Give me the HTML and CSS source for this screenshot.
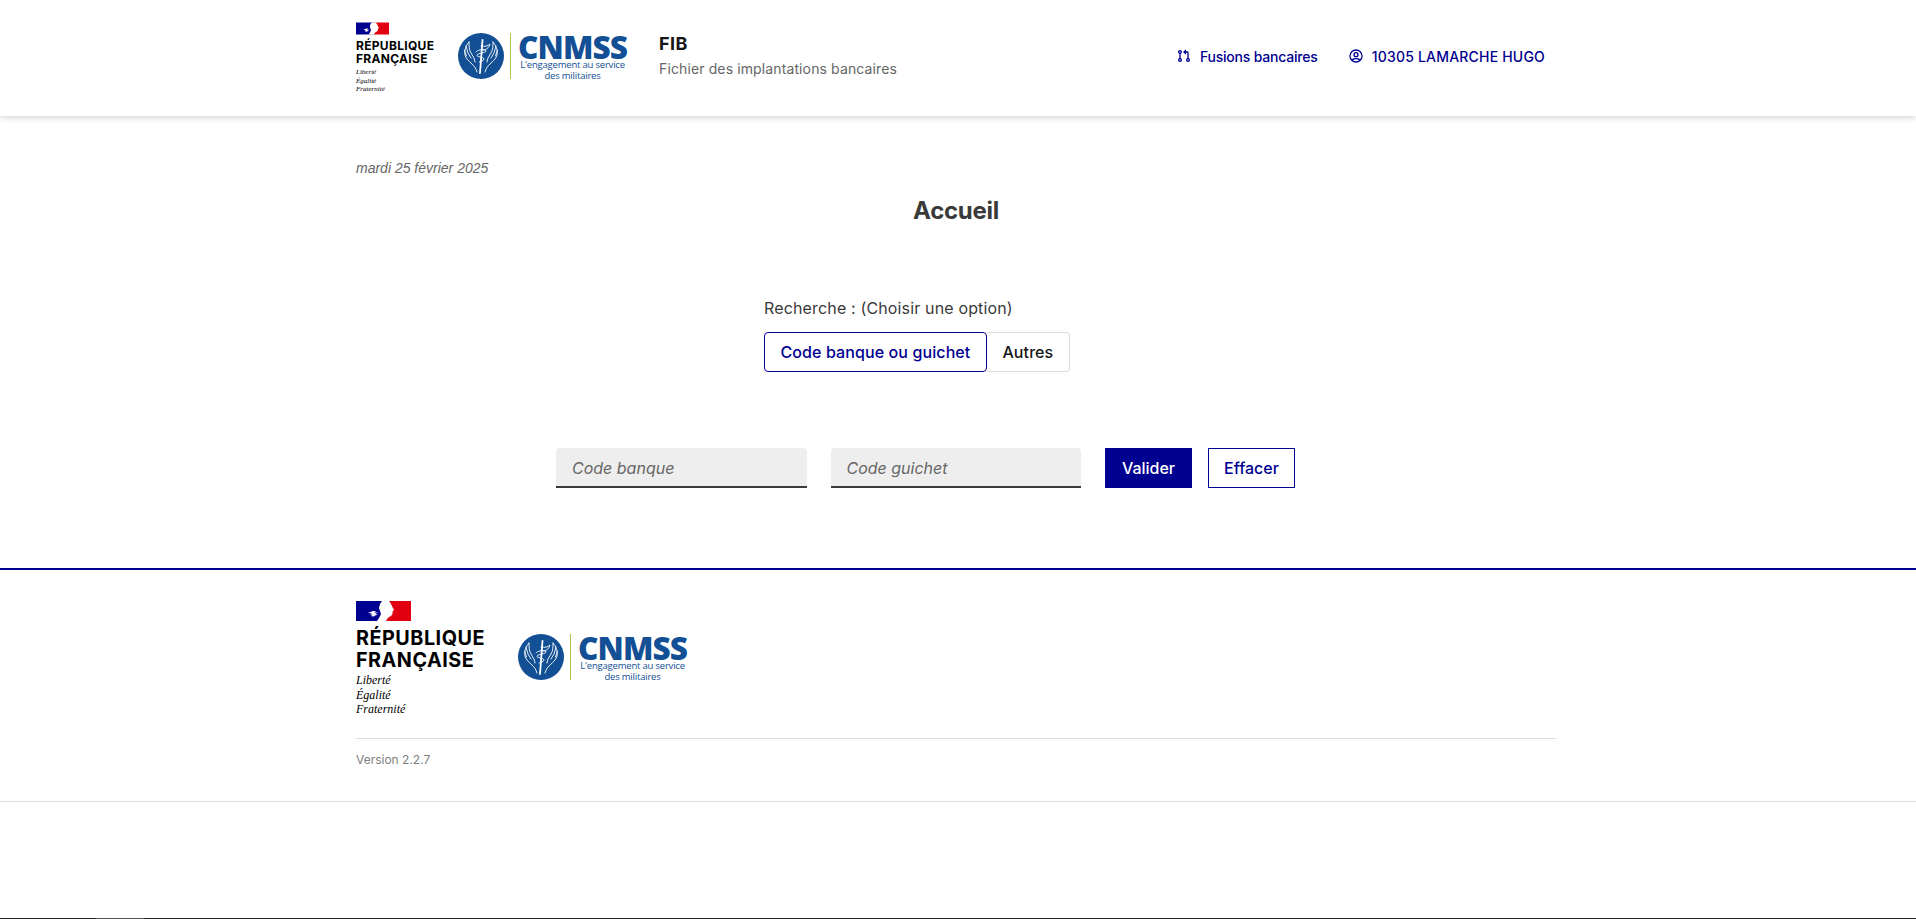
FILE: index.html
```html
<!DOCTYPE html>
<html lang="fr">
<head>
    <meta charset="UTF-8">
    <meta name="viewport" content="width=device-width, initial-scale=1.0">
    <title>FIB - Accueil</title>
    <link rel="stylesheet" href="styles.css">
</head>
<body>
    <svg class="defs" width="0" height="0" aria-hidden="true">
        <symbol id="flag" viewBox="0 0 55 20">
            <rect width="28" height="20" fill="#000091"/>
            <rect x="28" width="27" height="20" fill="#e1000f"/>
            <path d="M26 0h7l2 3 1.500 3 1.500 3-1.500 1.500v2.500l-1.500 2-2 1-2 2-1 2h-9l2-3 2-4-1-3-1-3 1-4z" fill="#fff"/>
            <path d="M12 12l5-2h3l-2 1.500h4l-3 1.500h3l-4 1.500h3l-4 1-2-.5 2-1.500-3 .5 2-1.500z" fill="#fff"/>
        </symbol>
        <symbol id="emblem" viewBox="0 0 46 46">
            <circle cx="23" cy="23" r="23" fill="#124f94"/>
            <g fill="none" stroke="#fff" stroke-width="0.9" stroke-linecap="round" stroke-linejoin="round">
                <path d="M11 9c-3 3-5 9-4 13 1 4 4 6 7 9 2 2 4 4 5 8"/>
                <path d="M11 9c0 4 0 8 2 11l3 5 1 4"/>
                <path d="M8 13l2 7 3 5M6.500 17l2 6"/>
                <path d="M35 9c3 3 5 9 4 13-1 4-4 6-7 9-2 2-4 4-5 8"/>
                <path d="M35 9c0 4 0 8-2 11l-3 5-1 4"/>
                <path d="M38 13l-2 7-3 5M39.500 17l-2 6"/>
                <path d="M24.500 7l-2.500 33" stroke-width="1.800"/>
                <path d="M18 19c2-3 10-3 10-1s-8 2-9 4 7 2 7 4-4 2-5 3"/>
                <path d="M23 13c4 1 7 0 9-2-1 4-4 6-7 6"/>
            </g>
        </symbol>
        <symbol id="icon-merge" viewBox="0 0 24 24">
            <path fill="currentColor" d="M15 5h2a2 2 0 0 1 2 2v8.170a3 3 0 1 1-2 0V7h-2v3l-4.500-4L15 2v3zM5 8.830a3 3 0 1 1 2 0v6.340a3 3 0 1 1-2 0V8.830zM6 7a1 1 0 1 0 0-2 1 1 0 0 0 0 2zm0 12a1 1 0 1 0 0-2 1 1 0 0 0 0 2zm12 0a1 1 0 1 0 0-2 1 1 0 0 0 0 2z"/>
        </symbol>
        <symbol id="icon-user" viewBox="0 0 24 24">
            <path fill="currentColor" fill-rule="evenodd" d="M12 2a10 10 0 1 1 0 20 10 10 0 0 1 0-20zm0 2a8 8 0 0 0-6.200 13.050A8.900 8.900 0 0 1 12 15c2.400 0 4.600.8 6.200 2.050A8 8 0 0 0 12 4zm0 13c-1.900 0-3.600.6-4.800 1.500A8 8 0 0 0 12 20c1.800 0 3.500-.6 4.800-1.500-1.200-.9-2.900-1.500-4.800-1.500zm0-11a4 4 0 1 1 0 8 4 4 0 0 1 0-8zm0 2a2 2 0 1 0 0 4 2 2 0 0 0 0-4z"/>
        </symbol>
    </svg>

    <header class="site-header">
        <div class="container header-row">
            <div class="brand">
                <div class="marianne">
                    <svg class="flag"><use href="#flag"/></svg>
                    <p class="rf-name">RÉPUBLIQUE<br>FRANÇAISE</p>
                    <p class="rf-motto">Liberté<br>Égalité<br>Fraternité</p>
                </div>
                <div class="cnmss">
                    <svg class="emblem"><use href="#emblem"/></svg>
                    <div class="cnmss-text">
                        <div class="cnmss-name">CNMSS</div>
                        <div class="cnmss-tag">L'engagement au service<br>des militaires</div>
                    </div>
                </div>
                <div class="app-title">
                    <p class="app-name">FIB</p>
                    <p class="app-desc">Fichier des implantations bancaires</p>
                </div>
            </div>
            <nav class="tools">
                <a href="#" class="tool-link tool-fusions"><svg class="tool-icon"><use href="#icon-merge"/></svg>Fusions bancaires</a>
                <a href="#" class="tool-link tool-user"><svg class="tool-icon"><use href="#icon-user"/></svg>10305 LAMARCHE HUGO</a>
            </nav>
        </div>
    </header>

    <main class="container content">
        <p class="date">mardi 25 février 2025</p>
        <h1>Accueil</h1>

        <div class="search-choice">
            <p class="search-label">Recherche : (Choisir une option)</p>
            <div class="segmented">
                <button type="button" class="segment active">Code banque ou guichet</button>
                <button type="button" class="segment">Autres</button>
            </div>
        </div>

        <form class="search-form">
            <input type="text" class="field" placeholder="Code banque">
            <input type="text" class="field" placeholder="Code guichet">
            <button type="submit" class="btn btn-primary">Valider</button>
            <button type="reset" class="btn btn-secondary">Effacer</button>
        </form>
    </main>

    <footer class="site-footer">
        <div class="container">
            <div class="footer-brand">
                <div class="marianne marianne-large">
                    <svg class="flag"><use href="#flag"/></svg>
                    <p class="rf-name">RÉPUBLIQUE<br>FRANÇAISE</p>
                    <p class="rf-motto">Liberté<br>Égalité<br>Fraternité</p>
                </div>
                <div class="cnmss">
                    <svg class="emblem"><use href="#emblem"/></svg>
                    <div class="cnmss-text">
                        <div class="cnmss-name">CNMSS</div>
                        <div class="cnmss-tag">L'engagement au service<br>des militaires</div>
                    </div>
                </div>
            </div>
            <p class="version">Version 2.2.7</p>
        </div>
    </footer>

    <div class="window-edge"><span></span></div>
</body>
</html>
```

FILE: styles.css
```css
* {
    box-sizing: border-box;
}

html, body {
    height: 100%;
}

body {
    margin: 0;
    display: flex;
    flex-direction: column;
    font-family: Inter, "Noto Sans", sans-serif;
    font-size: 16px;
    color: #3a3a3a;
    background-color: #fff;
}

p, h1 {
    margin: 0;
}

.defs {
    position: absolute;
}

.container {
    width: 1200px;
    margin: 0 auto;
    position: relative;
    left: -2px;
}

/* header */
.site-header {
    height: 116px;
    flex: none;
    box-shadow: 0 2px 6px rgba(0, 0, 18, 0.16);
}

.header-row {
    height: 100%;
    display: flex;
    justify-content: space-between;
}

.brand {
    display: flex;
}

.marianne {
    width: 102px;
    padding-top: 22px;
    color: #000;
}

.flag {
    display: block;
    width: 33px;
    height: 13px;
}

.rf-name {
    margin-top: 5px;
    font-size: 12px;
    font-weight: 700;
    line-height: 12.500px;
    letter-spacing: 0.3px;
}

.rf-motto {
    margin-top: 3px;
    font-family: "Liberation Serif", serif;
    font-style: italic;
    font-size: 7px;
    line-height: 8.500px;
}

.cnmss {
    display: flex;
    align-items: center;
    height: 46px;
    margin-top: 33px;
}

.emblem {
    width: 46px;
    height: 46px;
    flex: none;
}

.cnmss-text {
    margin-left: 6px;
    padding-left: 6px;
    border-left: 1px solid #a4c64a;
    height: 46px;
    width: 118px;
    text-align: center;
    color: #124f94;
}

.cnmss-name {
    font-family: "Open Sans", sans-serif;
    font-weight: 800;
    font-size: 31.500px;
    line-height: 27px;
    letter-spacing: -0.9px;
}

.cnmss-tag {
    font-family: "Open Sans", sans-serif;
    font-size: 9.500px;
    line-height: 10.500px;
    letter-spacing: -0.2px;
}

.app-title {
    margin-left: 31px;
    padding-top: 32px;
}

.app-name {
    font-size: 18px;
    font-weight: 700;
    line-height: 24px;
    letter-spacing: 0.5px;
    color: #161616;
}

.app-desc {
    margin-top: 3px;
    font-size: 14px;
    line-height: 20px;
    letter-spacing: 0.12px;
    color: #666;
}

.tools {
    display: flex;
    gap: 30px;
    padding: 46px 11px 0 0;
}

.tool-link {
    display: flex;
    align-items: center;
    height: 20px;
    font-size: 14px;
    font-weight: 500;
    color: #000091;
    text-decoration: none;
}

.tool-fusions {
    letter-spacing: -0.2px;
}

.tool-user {
    letter-spacing: 0.2px;
}

.tool-icon {
    width: 16px;
    height: 16px;
    margin-right: 8px;
}

/* main */
.content {
    height: 452px;
    flex: none;
}

.date {
    padding-top: 44px;
    font-family: "Liberation Sans", sans-serif;
    font-style: italic;
    font-size: 14px;
    line-height: 16px;
    color: #666;
}

h1 {
    margin-top: 19px;
    text-align: center;
    font-size: 24px;
    font-weight: 700;
    line-height: 32px;
    letter-spacing: -0.3px;
}

.search-choice {
    margin: 69px 0 0 408px;
}

.search-label {
    line-height: 24px;
    letter-spacing: 0.15px;
}

.segmented {
    display: flex;
    margin-top: 12px;
}

.segment {
    height: 40px;
    padding: 0 15.500px;
    font: 500 16px Inter, "Noto Sans", sans-serif;
    letter-spacing: 0.1px;
    color: #161616;
    background-color: #fff;
    border: 1px solid #ddd;
    border-left: none;
    border-radius: 0 4px 4px 0;
}

.segment.active {
    color: #000091;
    border: 1px solid #000091;
    border-radius: 4px;
}

.search-form {
    display: flex;
    margin: 76px 0 0 200px;
}

.field {
    width: 250.500px;
    height: 40px;
    margin-right: 24px;
    padding: 2px 16px 0;
    font: italic 400 16px Inter, "Noto Sans", sans-serif;
    background-color: #eee;
    border: none;
    border-bottom: 2px solid #3a3a3a;
    border-radius: 4px 4px 0 0;
}

.field::placeholder {
    color: #666;
    opacity: 1;
}

.btn {
    width: 87px;
    height: 40px;
    font: 500 16px Inter, "Noto Sans", sans-serif;
    cursor: pointer;
}

.btn-primary {
    color: #fff;
    background-color: #000091;
    border: none;
    margin-right: 16px;
}

.btn-secondary {
    color: #000091;
    background-color: #fff;
    border: 1px solid #000091;
}

/* footer */
.site-footer {
    height: 234px;
    flex: none;
    padding-top: 31px;
    border-top: 2px solid #000091;
    border-bottom: 1px solid #ddd;
}

.footer-brand {
    display: flex;
    height: 138px;
    border-bottom: 1px solid #ddd;
}

.marianne-large {
    width: 162px;
    padding-top: 0;
}

.marianne-large .flag {
    width: 55px;
    height: 20px;
}

.marianne-large .rf-name {
    margin-top: 6px;
    font-size: 19.800px;
    line-height: 22px;
    letter-spacing: 0.5px;
}

.marianne-large .rf-motto {
    margin-top: 2px;
    font-size: 12px;
    line-height: 14.500px;
}

.version {
    margin-top: 13px;
    font-size: 12px;
    line-height: 16px;
    color: #808080;
}

.window-edge {
    margin-top: auto;
    height: 1px;
    flex: none;
    background-color: #222;
}

.window-edge span {
    display: block;
    width: 48px;
    height: 1px;
    margin-left: 96px;
    background-color: #555;
}
```
